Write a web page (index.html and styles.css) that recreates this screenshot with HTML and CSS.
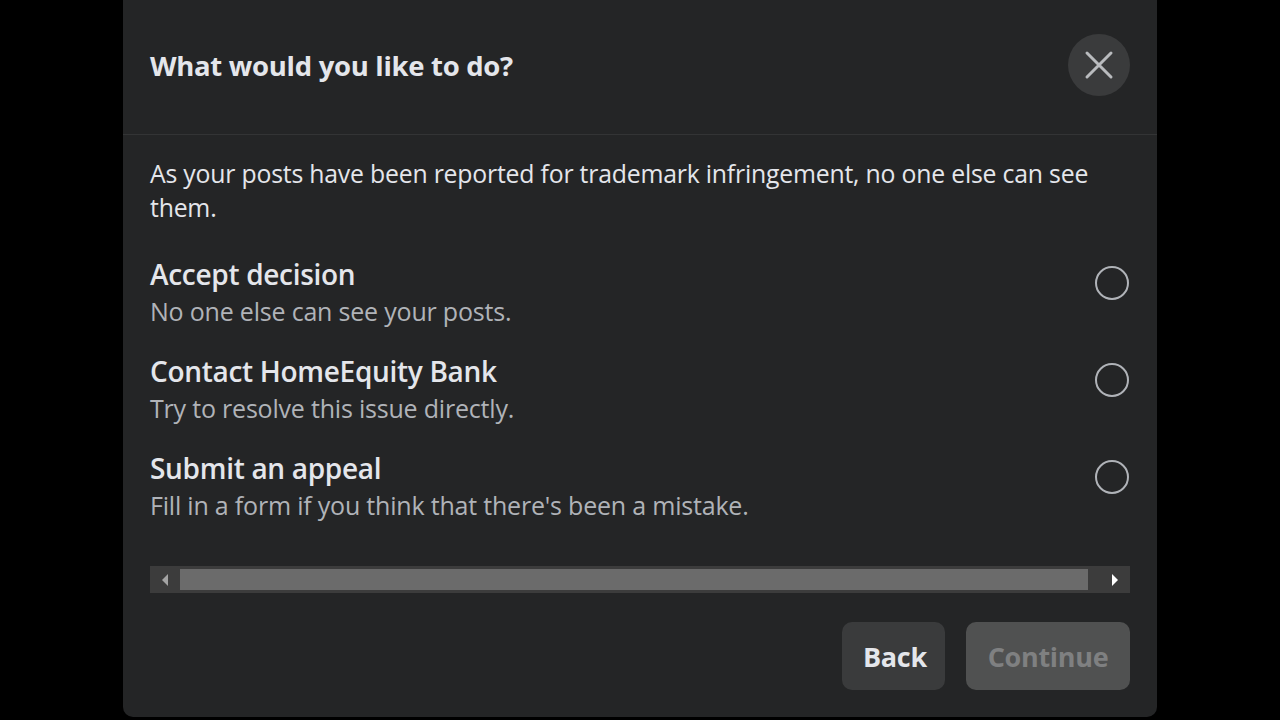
FILE: index.html
```html
<!DOCTYPE html>
<html lang="en">
<head>
<meta charset="utf-8">
<link rel="stylesheet" href="styles.css">
</head>
<body>
<div class="dialog">
  <div class="header">
    <h1 class="title">What would you like to do?</h1>
    <button class="close" aria-label="Close">
      <svg width="30" height="30" viewBox="0 0 30 30"><path d="M3 3 L27 27 M27 3 L3 27" stroke="#b9bbbe" stroke-width="3" stroke-linecap="round"/></svg>
    </button>
  </div>
  <div class="body">
    <p class="desc">As your posts have been reported for trademark infringement, no one else can see them.</p>
    <div class="options">
      <div class="option">
        <div class="texts">
          <div class="opt-title">Accept decision</div>
          <div class="opt-sub">No one else can see your posts.</div>
        </div>
        <span class="radio"></span>
      </div>
      <div class="option">
        <div class="texts">
          <div class="opt-title">Contact HomeEquity Bank</div>
          <div class="opt-sub">Try to resolve this issue directly.</div>
        </div>
        <span class="radio"></span>
      </div>
      <div class="option">
        <div class="texts">
          <div class="opt-title">Submit an appeal</div>
          <div class="opt-sub">Fill in a form if you think that there's been a mistake.</div>
        </div>
        <span class="radio"></span>
      </div>
    </div>
    <div class="scrollbar">
      <span class="arrow left"></span>
      <span class="thumb"></span>
      <span class="arrow right"></span>
    </div>
    <div class="actions">
      <button class="btn back">Back</button>
      <button class="btn continue">Continue</button>
    </div>
  </div>
</div>
</body>
</html>
```
FILE: styles.css
```css
html, body {
  margin: 0;
  padding: 0;
  background: #000;
  width: 1280px;
  height: 720px;
  overflow: hidden;
  font-family: "Open Sans", "Noto Sans", sans-serif;
}
.dialog {
  width: 1034px;
  height: 717px;
  margin-left: 123px;
  background: #242526;
  border-radius: 0 0 10px 10px;
  color: #e4e6eb;
  box-sizing: border-box;
  display: flex;
  flex-direction: column;
}
.header {
  height: 135px;
  box-sizing: border-box;
  border-bottom: 1px solid #333435;
  display: flex;
  align-items: center;
  justify-content: space-between;
  padding: 0 27px 4px 27px;
}
.title {
  margin: 0;
  font-size: 27.5px;
  font-weight: 700;
  letter-spacing: -0.3px;
  color: #e4e6eb;
}
.close {
  width: 62px;
  height: 62px;
  border-radius: 50%;
  border: none;
  background: #3a3b3c;
  display: flex;
  align-items: center;
  justify-content: center;
  padding: 0;
}
.body {
  padding: 21px 27px 27px 27px;
  display: flex;
  flex-direction: column;
  flex: 1;
}
.desc {
  margin: 0;
  font-size: 24.8px;
  line-height: 34px;
  letter-spacing: -0.2px;
  color: #e4e6eb;
}
.options {
  margin-top: 32px;
  display: flex;
  flex-direction: column;
  gap: 23px;
}
.option {
  display: flex;
  justify-content: space-between;
  align-items: flex-start;
}
.opt-title {
  font-size: 28px;
  line-height: 36px;
  font-weight: 600;
  letter-spacing: -0.3px;
  color: #e4e6eb;
}
.opt-sub {
  font-size: 25px;
  line-height: 38px;
  letter-spacing: -0.2px;
  color: #b0b3b8;
}
.radio {
  width: 30px;
  height: 30px;
  border: 2px solid #b0b3b8;
  border-radius: 50%;
  margin-top: 10px;
  margin-right: 1px;
}
.scrollbar {
  margin-top: 42px;
  height: 27px;
  background: #3c3c3c;
  display: flex;
  align-items: center;
}
.arrow {
  width: 30px;
  height: 27px;
  display: flex;
  align-items: center;
  justify-content: center;
}
.arrow.left::before {
  content: "";
  border-top: 6px solid transparent;
  border-bottom: 6px solid transparent;
  border-right: 6px solid #a3a3a3;
}
.arrow.right {
  width: 42px;
  justify-content: flex-end;
  padding-right: 12px;
  box-sizing: border-box;
}
.arrow.right::before {
  content: "";
  border-top: 6px solid transparent;
  border-bottom: 6px solid transparent;
  border-left: 6px solid #ffffff;
}
.thumb {
  flex: 1;
  height: 21px;
  background: #6b6b6b;
}
.actions {
  margin-top: 29px;
  display: flex;
  justify-content: flex-end;
  gap: 21px;
}
.btn {
  height: 68px;
  border: none;
  border-radius: 10px;
  font-family: "Open Sans", "Noto Sans", sans-serif;
  font-size: 27px;
  font-weight: 700;
  letter-spacing: -0.3px;
  padding: 0 21px;
}
.back {
  width: 103px;
  background: #3a3b3c;
  color: #e4e6eb;
}
.continue {
  width: 164px;
  background: #505151;
  color: #7f8081;
}
```
